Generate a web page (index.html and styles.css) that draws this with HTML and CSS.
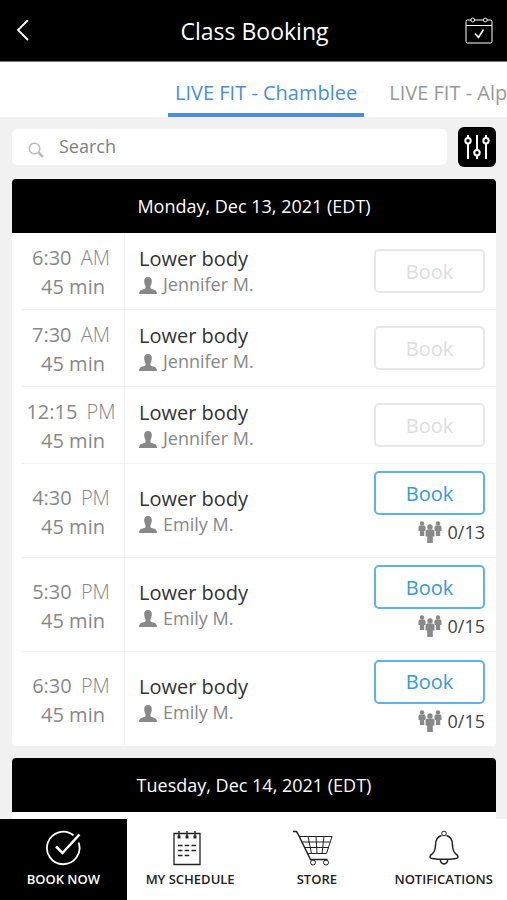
FILE: index.html
```html
<!DOCTYPE html>
<html lang="en">
<head>
    <meta charset="UTF-8">
    <meta name="viewport" content="width=device-width, initial-scale=1.0">
    <title>Class Booking</title>
    <link rel="stylesheet" href="styles.css">
</head>
<body>
    <!-- shared icons -->
    <svg class="sprite" aria-hidden="true">
        <symbol id="person" viewBox="0 0 18 17">
            <path d="M9 0C6.200 0 5 1.900 5.200 4.500C5.300 6.600 6 8.200 6.500 9.200V11.300C5.700 12.300 1.500 12.500 .6 14.400C.2 15 .1 16 .1 17H17.900C17.900 16 17.800 15 17.400 14.400C16.500 12.500 12.300 12.300 11.500 11.300V9.200C12 8.200 12.700 6.600 12.800 4.500C13 1.900 11.800 0 9 0Z"/>
        </symbol>
        <symbol id="people" viewBox="0 0 24 22">
            <circle cx="4" cy="2.500" r="2.200"/>
            <path d="M1.500 4.500H6.500L7.500 6V10H6.200V15H1.900V10H.5V6Z"/>
            <circle cx="20" cy="2.500" r="2.200"/>
            <path d="M17.500 4.500H22.500L23.500 6V10H22.200V15H17.900V10H16.500V6Z"/>
            <circle cx="12" cy="6" r="2.700"/>
            <path d="M9 8.500H15L16.500 10.200V15.500H14.800V22H9.200V15.500H7.500V10.200Z"/>
        </symbol>
    </svg>

    <header class="top-bar">
        <button class="icon-button" aria-label="Back">
            <svg width="14" height="22" viewBox="0 0 14 22"><path d="M12 0L2 10L12 20" stroke-width="1.800"/></svg>
        </button>
        <h1>Class Booking</h1>
        <button class="icon-button" aria-label="Calendar">
            <svg width="28" height="28" viewBox="0 0 28 28">
                <path d="M6 3H2.500Q1 3 1 4.500V24.500Q1 26 2.500 26H25.500Q27 26 27 24.500V4.500Q27 3 25.500 3H22M9.500 3H18.500M1 8.500H27"/>
                <circle cx="7.700" cy="3" r="1.900"/>
                <circle cx="20.300" cy="3" r="1.900"/>
                <path d="M10 16.500L13.500 20.500L18.500 12.500" stroke-width="1.500"/>
            </svg>
        </button>
    </header>

    <nav class="tabs" aria-label="Locations">
        <a class="tab active" href="#chamblee">LIVE FIT - Chamblee</a>
        <a class="tab" href="#alp">LIVE FIT - Alp</a>
    </nav>

    <main class="content">
        <form class="search-row">
            <label class="search-box">
                <svg width="16" height="16" viewBox="0 0 16 16"><circle cx="6.500" cy="6.500" r="5.300"/><path d="M10.500 10.500L15 15" stroke-width="2.500"/></svg>
                <input type="search" placeholder="Search" aria-label="Search">
            </label>
            <button class="filter-button" type="button" aria-label="Filters">
                <svg width="26" height="26" viewBox="0 0 26 26">
                    <path d="M4 1V4M4 9.500V25M13 1V16M13 21.500V25M22 1V4M22 9.500V25"/>
                    <circle cx="4" cy="6.800" r="2.700"/>
                    <circle cx="13" cy="18.700" r="2.700"/>
                    <circle cx="22" cy="6.800" r="2.700"/>
                </svg>
            </button>
        </form>

        <section class="day">
            <h2>Monday, Dec 13, 2021 (EDT)</h2>
            <ul class="classes">
                <li class="class-row">
                    <div class="time"><div>6:30 <span>AM</span></div><div class="length">45 min</div></div>
                    <div class="info">
                        <h3>Lower body</h3>
                        <p><svg width="18" height="17"><use href="#person"/></svg>Jennifer M.</p>
                    </div>
                    <div class="action"><button class="book" disabled>Book</button></div>
                </li>
                <li class="class-row">
                    <div class="time"><div>7:30 <span>AM</span></div><div class="length">45 min</div></div>
                    <div class="info">
                        <h3>Lower body</h3>
                        <p><svg width="18" height="17"><use href="#person"/></svg>Jennifer M.</p>
                    </div>
                    <div class="action"><button class="book" disabled>Book</button></div>
                </li>
                <li class="class-row">
                    <div class="time"><div>12:15 <span>PM</span></div><div class="length">45 min</div></div>
                    <div class="info">
                        <h3>Lower body</h3>
                        <p><svg width="18" height="17"><use href="#person"/></svg>Jennifer M.</p>
                    </div>
                    <div class="action"><button class="book" disabled>Book</button></div>
                </li>
                <li class="class-row open">
                    <div class="time"><div>4:30 <span>PM</span></div><div class="length">45 min</div></div>
                    <div class="info">
                        <h3>Lower body</h3>
                        <p><svg width="18" height="17"><use href="#person"/></svg>Emily M.</p>
                    </div>
                    <div class="action">
                        <button class="book">Book</button>
                        <div class="spots"><svg width="24" height="22"><use href="#people"/></svg>0/13</div>
                    </div>
                </li>
                <li class="class-row open">
                    <div class="time"><div>5:30 <span>PM</span></div><div class="length">45 min</div></div>
                    <div class="info">
                        <h3>Lower body</h3>
                        <p><svg width="18" height="17"><use href="#person"/></svg>Emily M.</p>
                    </div>
                    <div class="action">
                        <button class="book">Book</button>
                        <div class="spots"><svg width="24" height="22"><use href="#people"/></svg>0/15</div>
                    </div>
                </li>
                <li class="class-row open">
                    <div class="time"><div>6:30 <span>PM</span></div><div class="length">45 min</div></div>
                    <div class="info">
                        <h3>Lower body</h3>
                        <p><svg width="18" height="17"><use href="#person"/></svg>Emily M.</p>
                    </div>
                    <div class="action">
                        <button class="book">Book</button>
                        <div class="spots"><svg width="24" height="22"><use href="#people"/></svg>0/15</div>
                    </div>
                </li>
            </ul>
        </section>

        <section class="day">
            <h2>Tuesday, Dec 14, 2021 (EDT)</h2>
            <ul class="classes next"></ul>
        </section>
    </main>

    <nav class="bottom-nav" aria-label="Main">
        <a class="active" href="#book">
            <svg width="36" height="36" viewBox="0 0 36 36">
                <path d="M28.500 5.300A16.300 16.300 0 1 0 33.600 12.500" stroke-width="1.800"/>
                <path d="M11 16.500L17.500 23L34.500 4.500" stroke-width="2.500"/>
            </svg>
            BOOK NOW
        </a>
        <a href="#schedule">
            <svg width="42" height="36" viewBox="0 0 42 36">
                <path d="M5 3.500H31V34.500H5Z" stroke-width="1.300"/>
                <path d="M10 1V7M18 1V7M26 1V7" stroke-width="1.300"/>
                <path d="M10 5.500V8.500M18 5.500V8.500M26 5.500V8.500" stroke-width="3"/>
                <path d="M9 15.500H13.500M15.700 15.500H20.200M22.500 15.500H27M9 20.500H13.500M15.700 20.500H20.200M22.500 20.500H27M9 25.500H13.500M15.700 25.500H20.200" stroke-width="1.600"/>
            </svg>
            MY SCHEDULE
        </a>
        <a href="#store">
            <svg class="cart" width="50" height="36" viewBox="0 0 50 36">
                <path d="M1 1.500H4.500L6 4L18.500 29.500H35.500" stroke-width="1.500"/>
                <path d="M7 6.500H40L34.500 23.500H15.500M10 12H38M12.800 17.500H36.300M16 6.500L19.500 23.500M24 6.500L25 23.500M32 6.500L30 23.500"/>
                <circle cx="21" cy="32.500" r="2.500"/>
                <circle cx="34" cy="32.500" r="2.500"/>
            </svg>
            STORE
        </a>
        <a href="#notifications">
            <svg width="36" height="36" viewBox="0 0 36 36">
                <circle cx="18" cy="3.500" r="2.300"/>
                <path d="M15.500 5.500C10.500 7 9.500 11 9.500 15C9.500 22 7 23 4.500 25.500C3.500 27 4 28.500 6 28.500C13 29.500 23 29.500 30 28.500C32 28.500 32.500 27 31.500 25.500C29 23 26.500 22 26.500 15C26.500 11 25.500 7 20.500 5.500" stroke-width="1.500"/>
                <path d="M14.500 29.500A3.600 3.600 0 1 0 21.500 29.500" stroke-width="1.500"/>
            </svg>
            NOTIFICATIONS
        </a>
    </nav>
</body>
</html>
```

FILE: styles.css
```css
* {
    box-sizing: border-box;
}

body {
    margin: 0;
    height: 100vh;
    display: flex;
    flex-direction: column;
    overflow: hidden;
    background: #f1f1f1;
    color: #333;
    font-family: "Open Sans", "Noto Sans", sans-serif;
}

h1, h2, h3, p, ul {
    margin: 0;
    padding: 0;
    font-weight: 400;
}

button {
    font-family: inherit;
    padding: 0;
    cursor: pointer;
}

a {
    text-decoration: none;
}

svg {
    fill: none;
    stroke: currentColor;
    flex-shrink: 0;
}

.sprite {
    position: absolute;
    width: 0;
    height: 0;
}

.top-bar {
    display: flex;
    align-items: center;
    justify-content: space-between;
    height: 62px;
    padding: 0 14px 0 16px;
    background: #000;
    color: #fff;
    border-bottom: 1px solid #777;
    flex-shrink: 0;
}

.top-bar h1 {
    font-size: 23px;
    line-height: 32px;
}

.icon-button {
    display: flex;
    width: 28px;
    height: 32px;
    align-items: center;
    background: none;
    border: none;
    color: #fff;
}

.tabs {
    display: flex;
    gap: 18px;
    height: 55px;
    padding-left: 168px;
    background: #fff;
    overflow: hidden;
    flex-shrink: 0;
}

.tab {
    padding: 17px 7px 0;
    font-size: 20px;
    line-height: 28px;
    white-space: nowrap;
    color: #999;
}

.tab.active {
    color: #4a8edb;
    border-bottom: 4px solid #4a8edb;
}

.content {
    flex: 1;
    min-height: 0;
    overflow: hidden;
    padding: 10px 11px 0 12px;
}

.search-row {
    display: flex;
    align-items: center;
    gap: 11px;
    margin-bottom: 12px;
}

.search-box {
    display: flex;
    flex: 1;
    align-items: center;
    gap: 15px;
    height: 36px;
    padding: 0 16px 2px;
    background: #fff;
    border-radius: 5px;
}

.search-box svg {
    margin-top: 8px;
    color: #bbb;
    stroke-width: 1.5;
}

.search-box input {
    flex: 1;
    min-width: 0;
    padding: 0;
    border: none;
    outline: none;
    background: none;
    font-family: inherit;
    font-size: 18px;
    color: #333;
}

.search-box input::placeholder {
    color: #808080;
}

.filter-button {
    display: flex;
    align-items: center;
    justify-content: center;
    width: 38px;
    height: 40px;
    background: #000;
    color: #fff;
    border: none;
    border-radius: 6px;
}

.filter-button svg {
    stroke-width: 2;
}

.day {
    margin-bottom: 12px;
}

.day h2 {
    height: 54px;
    background: #000;
    color: #fff;
    border-radius: 4px 4px 0 0;
    font-size: 18px;
    line-height: 54px;
    text-align: center;
}

.classes {
    list-style: none;
    background: #fff;
    padding-left: 10px;
    border-radius: 0 0 4px 4px;
}

.classes.next {
    min-height: 77px;
}

.class-row {
    display: flex;
    height: 77px;
    padding-right: 11px;
    border-bottom: 1px solid #eff1f3;
}

.class-row.open {
    height: 94px;
}

.class-row:last-child {
    border-bottom: none;
}

.time {
    display: flex;
    flex-direction: column;
    justify-content: center;
    width: 103px;
    padding: 2px 4px 0 0;
    border-right: 1px solid #f3f5f7;
    color: #888;
    font-size: 20px;
    line-height: 29px;
    text-align: center;
    white-space: nowrap;
}

.time span {
    margin-left: 4px;
    font-weight: 300;
}

.length {
    padding-left: 4px;
}

.info {
    display: flex;
    flex: 1;
    flex-direction: column;
    justify-content: center;
    padding-left: 14px;
}

.info h3 {
    font-size: 20px;
    line-height: 26px;
}

.info p {
    display: flex;
    align-items: center;
    gap: 6px;
    font-size: 18px;
    line-height: 24px;
    color: #888;
}

.info svg,
.spots svg {
    fill: #888;
    stroke: none;
}

.info svg {
    margin-top: 2px;
}

.action {
    display: flex;
    flex-direction: column;
    justify-content: center;
    width: 111px;
}

.open .action {
    padding-bottom: 6px;
}

.book {
    height: 44px;
    background: #fff;
    border: 2px solid #5eb2f0;
    border-radius: 5px;
    color: #3498e4;
    font-size: 20px;
}

.book:disabled {
    border-color: #e8e8e8;
    color: #ddd;
    cursor: default;
}

.spots {
    display: flex;
    align-items: center;
    justify-content: flex-end;
    gap: 6px;
    padding-top: 5px;
    font-size: 18px;
    line-height: 24px;
    color: #444;
}

.bottom-nav {
    display: grid;
    grid-template-columns: repeat(4, 1fr);
    height: 81px;
    background: #fff;
    flex-shrink: 0;
}

.bottom-nav a {
    display: flex;
    flex-direction: column;
    align-items: center;
    gap: 3px;
    padding-top: 11px;
    color: #222;
    font-size: 13px;
    font-weight: 600;
    line-height: 20px;
    white-space: nowrap;
}

.bottom-nav a.active {
    background: #000;
    color: #fff;
}
```
